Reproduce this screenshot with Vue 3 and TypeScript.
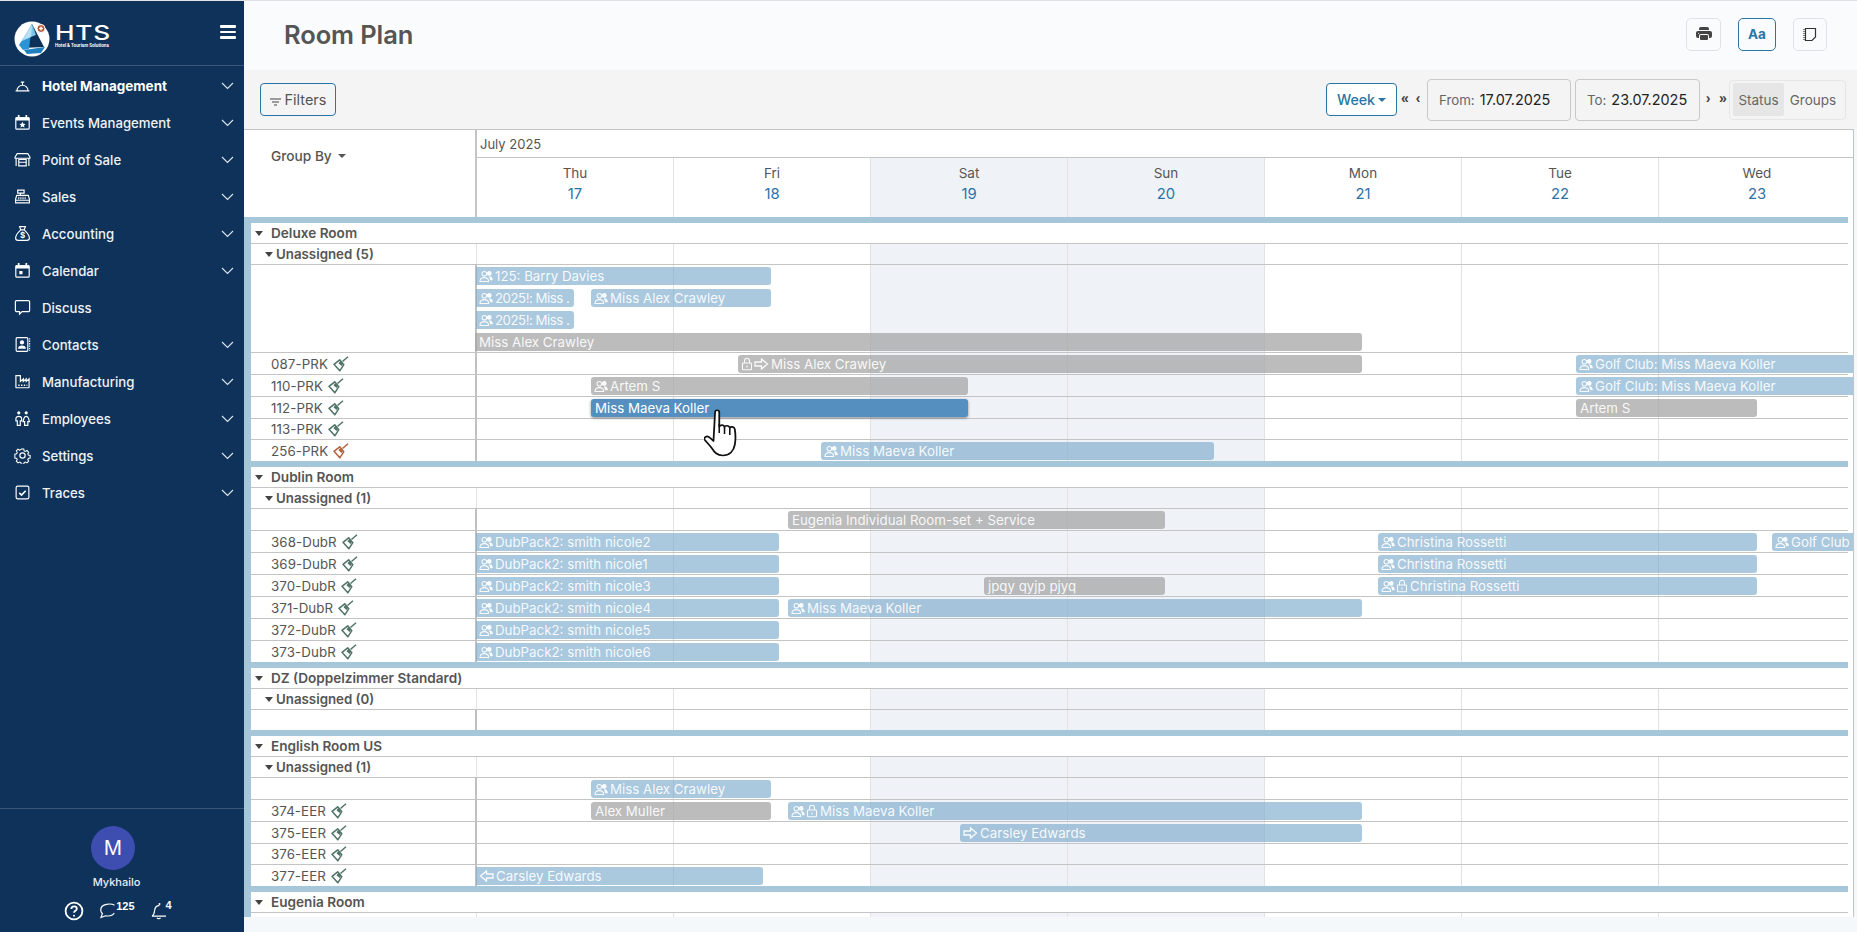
<script setup lang="ts">
type Icon = 'people' | 'lock' | 'right' | 'left'
interface Bar { x: number; e: number; t: string; g?: boolean; sel?: boolean; lane?: number; ic?: Icon[]; tight?: boolean }
interface Row { kind: 'group' | 'un' | 'lane' | 'room'; label?: string; h: number; dirty?: boolean; bars?: Bar[]; noLine?: boolean }

const P: Icon[] = ['people']
const nav = [
  { t: 'Hotel Management', on: true, i: '<path d="M1.5 13h13M2.8 13a5.2 5.2 0 0 1 10.4 0M8 7.6V5.2M6.4 4.8h3.2"/>' },
  { t: 'Events Management', i: '<path d="M2.5 3.5h11a.8.8 0 0 1 .8.8v9a1 1 0 0 1-1 1h-10.6a1 1 0 0 1-1-1v-9a.8.8 0 0 1 .8-.8z"/><path fill="#fff" stroke="none" d="M1.7 3h12.6v3H1.7zM3.6 1h1.6v3H3.6zM10.8 1h1.6v3h-1.6zM8 7.3l.9 1.9 2 .2-1.5 1.4.5 2L8 11.8l-1.9 1 .5-2-1.5-1.4 2-.2z"/>' },
  { t: 'Point of Sale', i: '<path d="M3 2.5h10l2 3.2v1.1H1V5.7zM2 7v7M14 7v7M4.5 8h7v6h-7zM4.5 10.6h7"/>' },
  { t: 'Sales', i: '<path d="M2.6 7h10.8l1.1 3.5v3.5H1.500v-3.500zM3.500 2h6v2.800h-6zM6 4.800V7M1.500 11.500h13"/><path stroke-dasharray="1 1" d="M4 8.700h8M4 10h8"/>' },
  { t: 'Accounting', i: '<path d="M5.300 1.500h5.400L9.600 4.600H6.400zM6.200 4.800C3.800 7 1.500 10 1.500 12.300c0 1.400 1 2.200 2.300 2.200h8.400c1.300 0 2.300-.8 2.300-2.200C14.500 10 12.200 7 9.800 4.800"/><text x="8" y="12.600" font-size="7.500" font-family="Inter" font-weight="700" fill="#fff" stroke="none" text-anchor="middle">$</text>' },
  { t: 'Calendar', i: '<path d="M2.500 3.500h11a.8.8 0 0 1 .8.8v9a1 1 0 0 1-1 1H2.700a1 1 0 0 1-1-1v-9a.8.8 0 0 1 .8-.8z"/><path fill="#fff" stroke="none" d="M1.700 3h12.600v3H1.700zM3.600 1h1.600v3H3.600zM10.800 1h1.600v3h-1.600zM5 8.500h3v3H5z"/>' },
  { t: 'Discuss', plain: true, i: '<path d="M2.500 1.500h11a1.200 1.200 0 0 1 1.200 1.200v8a1.200 1.200 0 0 1-1.200 1.200H7.600l-2.400 2.400v-2.400H2.500a1.200 1.200 0 0 1-1.200-1.200v-8a1.200 1.200 0 0 1 1.200-1.200z"/>' },
  { t: 'Contacts', i: '<rect x="2" y="1.500" width="11" height="13" rx="1"/><path stroke-dasharray="1.300 1" d="M14.700 2v12"/><circle cx="7.500" cy="6" r="2" fill="#fff" stroke="none"/><path fill="#fff" stroke="none" d="M3.800 12c0-2 1.600-3 3.700-3s3.700 1 3.700 3z"/>' },
  { t: 'Manufacturing', i: '<path d="M1.800 2.500v10.800a.6.6 0 0 0 .6.600h11.200a.6.600 0 0 0 .6-.6V5.500L11.500 8V5.500L8.800 8V5.500L6 8V2.500z"/><path stroke-dasharray="1.300 1.300" stroke-width="1.400" d="M4 11.500h8.500"/>' },
  { t: 'Employees', i: '<circle cx="4.500" cy="2.700" r="1.500" fill="#fff" stroke="none"/><circle cx="11.500" cy="2.700" r="1.500" fill="#fff" stroke="none"/><path d="M4.500 6c-1.600 0-2.700.8-2.700 2.200v2h1.300v4.300h2.800v-4.300h1.300v-2C7.200 6.800 6.100 6 4.500 6zM11.500 6c-1.300 0-2 1-2.200 2l-.8 3h1.500v3.500h3V11h1.500l-.8-3c-.2-1-.900-2-2.200-2z"/>' },
  { t: 'Settings', i: '<circle cx="8" cy="8" r="2.500"/><path d="M6.700 1.300h2.600l.4 1.900 1.300.6 1.700-1 1.800 1.800-1 1.700.6 1.300 1.900.4v2.600l-1.900.4-.6 1.300 1 1.700-1.800 1.800-1.700-1-1.300.6-.4 1.900H6.700l-.4-1.900-1.300-.6-1.700 1-1.800-1.800 1-1.700-.6-1.300-1.900-.4V6.600l1.900-.4.6-1.300-1-1.700 1.800-1.800 1.700 1 1.300-.6z" transform="translate(.8 .8) scale(.9)"/>' },
  { t: 'Traces', i: '<rect x="2" y="2" width="12" height="12" rx="1.500"/><path stroke-width="1.500" d="M5 8.300l2.100 2.100L11 6.300"/>' }
]

const nic = (n: number): Bar => ({ x: 476, e: 779, t: `DubPack2: smith nicole${n}`, ic: P })
const chris = (ic: Icon[] = P): Bar => ({ x: 1378, e: 1757, t: 'Christina Rossetti', ic })
const golf: Bar = { x: 1576, e: 1856, t: 'Golf Club: Miss Maeva Koller', ic: P }

const rows: Row[][] = [
  [
    { kind: 'group', label: 'Deluxe Room', h: 21 },
    { kind: 'un', label: 'Unassigned (5)', h: 21 },
    { kind: 'lane', h: 88, bars: [
      { x: 476, e: 771, t: '125: Barry Davies', ic: P, lane: 0 },
      { x: 476, e: 574, t: '2025!: Miss .', ic: P, lane: 1, tight: true },
      { x: 591, e: 771, t: 'Miss Alex Crawley', ic: P, lane: 1 },
      { x: 476, e: 574, t: '2025!: Miss .', ic: P, lane: 2, tight: true },
      { x: 475, e: 1362, t: 'Miss Alex Crawley', g: true, lane: 3 }
    ] },
    { kind: 'room', label: '087-PRK', h: 22, bars: [{ x: 738, e: 1362, t: 'Miss Alex Crawley', g: true, ic: ['lock', 'right'] }, golf] },
    { kind: 'room', label: '110-PRK', h: 22, bars: [{ x: 591, e: 968, t: 'Artem S', g: true, ic: P }, golf] },
    { kind: 'room', label: '112-PRK', h: 22, bars: [{ x: 591, e: 968, t: 'Miss Maeva Koller', sel: true }, { x: 1576, e: 1757, t: 'Artem S', g: true }] },
    { kind: 'room', label: '113-PRK', h: 21 },
    { kind: 'room', label: '256-PRK', h: 21, dirty: true, noLine: true, bars: [{ x: 821, e: 1214, t: 'Miss Maeva Koller', ic: P }] }
  ],
  [
    { kind: 'group', label: 'Dublin Room', h: 21 },
    { kind: 'un', label: 'Unassigned (1)', h: 21 },
    { kind: 'lane', h: 22, bars: [{ x: 788, e: 1165, t: 'Eugenia Individual Room-set + Service', g: true }] },
    { kind: 'room', label: '368-DubR', h: 22, bars: [nic(2), chris(), { x: 1772, e: 1856, t: 'Golf Club', ic: P }] },
    { kind: 'room', label: '369-DubR', h: 22, bars: [nic(1), chris()] },
    { kind: 'room', label: '370-DubR', h: 22, bars: [nic(3), { x: 984, e: 1165, t: 'jpqy qyjp pjyq', g: true }, chris(['people', 'lock'])] },
    { kind: 'room', label: '371-DubR', h: 22, bars: [nic(4), { x: 788, e: 1362, t: 'Miss Maeva Koller', ic: P }] },
    { kind: 'room', label: '372-DubR', h: 22, bars: [nic(5)] },
    { kind: 'room', label: '373-DubR', h: 21, noLine: true, bars: [nic(6)] }
  ],
  [
    { kind: 'group', label: 'DZ (Doppelzimmer Standard)', h: 21 },
    { kind: 'un', label: 'Unassigned (0)', h: 21 },
    { kind: 'lane', h: 20, noLine: true }
  ],
  [
    { kind: 'group', label: 'English Room US', h: 21 },
    { kind: 'un', label: 'Unassigned (1)', h: 21 },
    { kind: 'lane', h: 22, bars: [{ x: 591, e: 771, t: 'Miss Alex Crawley', ic: P }] },
    { kind: 'room', label: '374-EER', h: 22, bars: [{ x: 591, e: 771, t: 'Alex Muller', g: true }, { x: 788, e: 1362, t: 'Miss Maeva Koller', ic: ['people', 'lock'] }] },
    { kind: 'room', label: '375-EER', h: 22, bars: [{ x: 960, e: 1362, t: 'Carsley Edwards', ic: ['right'] }] },
    { kind: 'room', label: '376-EER', h: 21 },
    { kind: 'room', label: '377-EER', h: 21, noLine: true, bars: [{ x: 476, e: 763, t: 'Carsley Edwards', ic: ['left'] }] }
  ],
  [
    { kind: 'group', label: 'Eugenia Room', h: 21 },
    { kind: 'un', label: 'Unassigned (1)', h: 21 }
  ]
]

const days = [
  { d: 'Thu', n: 17 }, { d: 'Fri', n: 18 }, { d: 'Sat', n: 19, we: true }, { d: 'Sun', n: 20, we: true },
  { d: 'Mon', n: 21 }, { d: 'Tue', n: 22 }, { d: 'Wed', n: 23 }
]

const barStyle = (b: Bar) => ({
  left: `${b.x - 477}px`,
  width: `${b.e - b.x}px`,
  top: `${2 + 22 * (b.lane ?? 0)}px`
})
</script>

<template>
  <div class="app">
    <aside class="side">
      <div class="brand">
        <svg class="logo" width="36" height="36" viewBox="0 0 36 36">
          <circle cx="18" cy="18" r="17.500" fill="#fff" />
          <path d="M18 3 L30 26 L8 27 Z" fill="#0e3158" />
          <path d="M18 3 L5 24 L9 29 L15 28 Z" fill="#2a95d5" />
          <path d="M18 3 L9 19 L22 14 Z" fill="#7cc6ea" />
          <path d="M18 4 L4 22 L17 16 Z" fill="#ffffff" opacity=".45" />
          <path d="M10 29 L31 26 L27 32 L13 33 Z" fill="#1f7fc0" />
          <circle cx="27" cy="7.500" r="4" fill="#b5552f" stroke="#fff" stroke-width="1" />
          <path d="M27 5.500v4M25 7.500h4" stroke="#fff" stroke-width="1.300" />
        </svg>
        <div class="wordmark">
          <span class="hts">HTS</span>
          <span class="sub">Hotel &amp; Tourism Solutions</span>
        </div>
        <div class="burger"><i></i><i></i><i></i></div>
      </div>

      <nav class="nav">
        <div v-for="n in nav" :key="n.t" class="item" :class="{ on: n.on }">
          <svg class="ico" width="17" height="17" viewBox="0 0 16 16" fill="none" stroke="#fff" stroke-width="1.100" v-html="n.i"></svg>
          <span class="lbl">{{ n.t }}</span>
          <svg v-if="!n.plain" class="chev" width="13" height="8" viewBox="0 0 13 8" fill="none" stroke="#dfe6ee" stroke-width="1.100"><path d="M1 1l5.500 5.500L12 1" /></svg>
        </div>
      </nav>

      <div class="foot">
        <div class="avatar">M</div>
        <div class="uname">Mykhailo</div>
        <div class="tools">
          <svg width="20" height="20" viewBox="0 0 20 20" fill="none" stroke="#fff" stroke-width="1.800">
            <circle cx="10" cy="10" r="8.400" />
            <path d="M7.300 8c0-1.700 1.200-2.600 2.800-2.600 1.500 0 2.700.9 2.700 2.300 0 2.100-2.800 2.100-2.800 4.100" />
            <circle cx="10" cy="14.700" r="1" fill="#fff" stroke="none" />
          </svg>
          <span class="tool chat">
            <svg width="17" height="16" viewBox="0 0 17 16" fill="none" stroke="#fff" stroke-width="1.200"><path d="M15.500 2.200C13.500 1 10.500.8 7.500 1.300 3.800 2 1.500 4.500 1.800 7.500c.1 1.200.7 2.300 1.600 3L2 14.500l4.500-1.700c3.400.5 7.300-.4 8.700-2.800" /></svg>
            <b>125</b>
          </span>
          <span class="tool bell">
            <svg width="16" height="18" viewBox="0 0 16 18" fill="none" stroke="#fff" stroke-width="1.200"><path d="M1 14.200c2-1.300 2.400-3.500 2.600-5.700C3.900 5.500 5.800 3.500 8.500 3.300M1 14.200h14M6 15.700c.6 1.300 2.800 1.300 3.500 0" /><circle cx="8.500" cy="2" r="1" fill="#fff" stroke="none" /></svg>
            <b>4</b>
          </span>
        </div>
      </div>
    </aside>

    <main class="main">
      <header class="head">
        <h1>Room Plan</h1>
        <div class="actions">
          <button class="sq print">
            <svg width="16" height="16" viewBox="0 0 16 16" fill="#444"><path d="M5 1a2 2 0 0 0-2 2v1h10V3a2 2 0 0 0-2-2H5zm6 8H5a1 1 0 0 0-1 1v3a1 1 0 0 0 1 1h6a1 1 0 0 0 1-1v-3a1 1 0 0 0-1-1z" /><path d="M0 7a2 2 0 0 1 2-2h12a2 2 0 0 1 2 2v3a2 2 0 0 1-2 2h-1v-2a2 2 0 0 0-2-2H5a2 2 0 0 0-2 2v2H2a2 2 0 0 1-2-2V7zm2.500 1a.5.5 0 1 0 0-1 .5.5 0 0 0 0 1z" /></svg>
          </button>
          <button class="sq aa">Aa</button>
          <button class="sq note">
            <svg width="14" height="15" viewBox="0 0 14 15" fill="none" stroke="#333" stroke-width="1.200"><path d="M2.500 1.500h10v8.500l-3.500 3.500H2.500z" /><path stroke-dasharray="1 1" d="M1 2v11" /></svg>
          </button>
        </div>
      </header>

      <div class="bar">
        <button class="filters">
          <svg width="11" height="8" viewBox="0 0 11 8" fill="none" stroke="#444" stroke-width="1"><path d="M0 1h11M2 4h7M4 7h3" /></svg>
          Filters
        </button>
        <div class="controls">
          <button class="week">Week<i class="caret"></i></button>
          <span class="arrow a1">«</span>
          <span class="arrow a2">‹</span>
          <div class="date from"><span>From:</span><b>17.07.2025</b></div>
          <div class="date to"><span>To:</span><b>23.07.2025</b></div>
          <span class="arrow a3">›</span>
          <span class="arrow a4">»</span>
          <div class="seg"><span class="act">Status</span><span>Groups</span></div>
        </div>
      </div>

      <section class="board">
        <div class="thead">
          <div class="groupby">Group By<i class="caret grey"></i></div>
          <div class="cal">
            <div class="month">July 2025</div>
            <div class="dayrow">
              <div v-for="d in days" :key="d.n" class="day" :class="{ we: d.we }">
                <span>{{ d.d }}</span>
                <em>{{ d.n }}</em>
              </div>
            </div>
          </div>
        </div>

        <div class="tbody">
          <div v-for="(sec, si) in rows" :key="si" class="section">
            <div class="band"></div>
            <div v-for="(r, ri) in sec" :key="ri" class="row" :class="[r.kind, { noline: r.noLine }]" :style="{ height: r.h + 'px' }">
              <template v-if="r.kind === 'group'">
                <div class="glabel"><i class="tri"></i>{{ r.label }}</div>
              </template>
              <template v-else>
                <div class="cell">
                  <template v-if="r.kind === 'un'"><i class="tri small"></i><b>{{ r.label }}</b></template>
                  <template v-else-if="r.kind === 'room'">
                    <span class="rname">{{ r.label }}</span>
                    <svg class="broom" :class="{ dirty: r.dirty }" width="16" height="16" viewBox="0 0 16 16"><path d="M15 .8L9.500 5.500" stroke="currentColor" stroke-width="1.500" fill="none" /><path d="M6.700 3.800L10.800 8.700 6.800 14.800 1 8.300z" fill="none" stroke="currentColor" stroke-width="1.500" stroke-linejoin="round" /><path d="M7.200 5L9.800 8.200 8.600 10 5.500 7.200z" fill="currentColor" /></svg>
                  </template>
                </div>
                <div class="tl">
                  <div v-for="(b, bi) in r.bars" :key="bi" class="ev" :class="{ grey: b.g, sel: b.sel, flat: b.x <= 476, tight: b.tight }" :style="barStyle(b)">
                    <template v-for="(ic, ii) in b.ic" :key="ii">
                      <svg v-if="ic === 'people'" class="ei" width="14" height="13" viewBox="0 0 15 14" fill="none" stroke="currentColor" stroke-width="1.100"><circle cx="5.700" cy="4" r="2.500" /><path d="M1 12.500c0-3 2-4.300 4.700-4.300s4.700 1.300 4.700 4.300z" /><circle cx="11" cy="3.700" r="2" fill="currentColor" /><path d="M11 7.300c1.800 0 3.200 1.300 3.200 3.300h-2.400" fill="currentColor" /></svg>
                      <svg v-else-if="ic === 'lock'" class="ei" width="12" height="14" viewBox="0 0 12 14" fill="none" stroke="currentColor" stroke-width="1.100"><rect x="1.500" y="6" width="9" height="6.800" rx=".8" /><path d="M3.500 6V3.800a2.500 2.500 0 0 1 5 0V6M6 8.500v2" /></svg>
                      <svg v-else-if="ic === 'right'" class="ei" width="15" height="14" viewBox="0 0 15 14" fill="none" stroke="currentColor" stroke-width="1.300"><path d="M1 5h6.500V2l6 5-6 5V9H1z" /></svg>
                      <svg v-else class="ei" width="15" height="14" viewBox="0 0 15 14" fill="none" stroke="currentColor" stroke-width="1.300"><path d="M14 5H7.500V2l-6 5 6 5V9H14z" /></svg>
                    </template>
                    <span class="et">{{ b.t }}</span>
                  </div>
                  <svg v-if="r.label === '112-PRK'" class="hand" width="40" height="48" viewBox="0 0 38 48" preserveAspectRatio="none">
                    <path d="M10.500 3.500c0-3 4-3 4 0v14c1.500-2 4.500-1.800 5 .5.800-1.800 4.300-1.700 5 .7 1-1.400 4.200-1.200 4.700 1.200.8 5 .9 11 .1 15.600-1 6.500-5 11-11.500 11-5.500 0-8-3.500-10.500-7.500-2-3-5-6-6.500-8-1.500-2.300 1.500-4.500 3.800-3 1.800 1.200 3 2.500 4.400 4z" fill="#fff" stroke="#111" stroke-width="1.700" stroke-linejoin="round" />
                    <path d="M14.500 15v9M19.500 18v7M24.500 19v7" stroke="#111" stroke-width="1.500" fill="none" />
                  </svg>
                </div>
              </template>
            </div>
          </div>
        </div>
      </section>
    </main>
  </div>
</template>

<style>
html, body { margin: 0; height: 100%; overflow: hidden; background: #f5f8fb; }
</style>

<style scoped>
* { box-sizing: border-box; }
.app { display: flex; height: 932px; width: 1857px; border-top: 1px solid #dfe3e6; font-family: Inter, "Liberation Sans", sans-serif; overflow: hidden; color: #555; }
.side { width: 244px; flex: none; background: #0e3259; color: #fff; display: flex; flex-direction: column; }
.brand { height: 65px; border-bottom: 1px solid #3b5575; display: flex; align-items: flex-start; position: relative; padding: 20px 0 0 14px; }
.wordmark { margin-left: 5px; display: flex; flex-direction: column; color: #fff; }
.hts { font-size: 21px; font-weight: 500; letter-spacing: .6px; line-height: 19px; margin-top: 3px; transform: scale(1.25, .95); transform-origin: top left; }
.sub { font-size: 4.300px; font-weight: 700; line-height: 6px; margin-top: 0; white-space: nowrap; }
.burger { margin: 4px 8px 0 auto; width: 16px; display: flex; flex-direction: column; gap: 3px; }
.burger i { display: block; height: 2.500px; background: #fff; border-radius: 1px; }

.nav { padding-top: 1px; }
.item { height: 37px; display: flex; align-items: center; padding: 0 10px 0 14px; font-size: 13.200px; font-weight: 500; color: #eef2f6; }
.item.on { font-weight: 700; font-size: 13.500px; color: #fff; }
.ico { flex: none; }
.lbl { margin-left: 11px; white-space: nowrap; }
.chev { margin-left: auto; }

.foot { margin-top: auto; height: 124px; border-top: 1px solid #3b5575; display: flex; flex-direction: column; align-items: center; padding-top: 17px; position: relative; }
.avatar { width: 44px; height: 44px; border-radius: 50%; background: #3e4db0; display: flex; align-items: center; justify-content: center; font: 22px "Liberation Sans", sans-serif; color: #fff; margin-left: -18px; }
.uname { font-size: 11px; font-weight: 500; color: #e8edf3; margin-top: 5px; margin-left: -11px; }
.tools { display: flex; align-items: center; margin-top: 12px; margin-left: -8px; gap: 0; }
.tool { display: inline-flex; align-items: flex-start; position: relative; }
.tool b { font: 700 11px "Liberation Sans", sans-serif; margin-top: -3px; }
.chat { margin-left: 15px; }
.bell { margin-left: 16px; }
.bell b { margin-left: -1px; }

.main { flex: 1; min-width: 0; display: flex; flex-direction: column; }
.head { height: 69px; flex: none; background: #fafbfd; display: flex; align-items: center; justify-content: space-between; padding: 0 30px 3px 40px; }
h1 { margin: 0; font-size: 25.500px; font-weight: 600; color: #555; letter-spacing: -.1px; }
.actions { display: flex; gap: 17px; align-items: center; }
.sq { height: 33px; width: 35px; display: flex; align-items: center; justify-content: center; background: #fafbfd; border: 1px solid #dfe3e8; border-radius: 5px; padding: 0; font-family: inherit; }
.aa { width: 38px; border-color: #2a75a8; color: #2a75a8; font-size: 13.500px; font-weight: 700; }
.note { width: 34px; }

.bar { height: 59px; flex: none; background: #f4f4f4; display: flex; align-items: center; justify-content: space-between; padding: 0 11px 0 16px; }
.filters { width: 76px; height: 33px; border: 1px solid #2a75a8; border-radius: 4px; background: #f4f4f4; display: flex; align-items: center; justify-content: center; gap: 4px; font: 14.500px Inter, sans-serif; color: #555; padding: 0; }
.filters svg { margin-top: 4px; }
.controls { display: flex; align-items: center; }
.week { width: 71px; height: 33px; border: 1px solid #2a75a8; border-radius: 4px; background: #fff; color: #2a75a8; font: 500 14.200px Inter, sans-serif; display: flex; align-items: center; justify-content: center; gap: 2px; padding: 0; }
.caret { display: inline-block; width: 0; height: 0; border: 4px solid transparent; border-top-color: #2a75a8; border-bottom: 0; margin-left: 1px; }
.caret.grey { border-top-color: #555; margin-left: 6px; vertical-align: 3px; }
.arrow { font: 600 14px "Liberation Sans", sans-serif; color: #444; text-align: center; margin-top: -3px; }
.a1 { width: 12px; margin-left: 2px; }
.a2 { width: 6px; margin-left: 4px; }
.a3 { width: 6px; margin-left: 5px; }
.a4 { width: 8px; margin-left: 8px; }
.date { height: 42px; border: 1px solid #c9c9c9; border-radius: 4px; display: flex; align-items: center; font-size: 13.300px; color: #666; background: #f4f4f4; }
.date b { font-size: 14.400px; font-weight: 400; color: #222; margin-left: 5px; white-space: nowrap; }
.from { width: 144px; margin-left: 6px; padding-left: 11px; }
.to { width: 125px; margin-left: 4px; padding-left: 11px; }
.seg { display: flex; align-items: center; height: 40px; width: 117px; margin-left: 2px; border: 1px solid #e6e6e6; border-radius: 4px; padding: 3px; font-size: 13.500px; color: #666; }
.seg span { height: 33px; display: flex; align-items: center; justify-content: center; }
.seg .act { width: 51px; background: #e6e6e6; border-radius: 2px; }
.seg span:last-child { flex: 1; }

.board { height: 788px; flex: none; background: #fff; border-top: 1px solid #c4c4c4; border-right: 1px solid #c4c4c4; overflow: hidden; width: 1610px; }
.thead { display: flex; height: 87px; }
.groupby { width: 233px; flex: none; border-right: 2px solid #c4c4c4; padding: 18px 0 0 27px; font-size: 13.700px; font-weight: 500; color: #555; }
.cal { flex: 1; min-width: 0; }
.month { height: 28px; border-bottom: 1px solid #c4c4c4; padding: 6px 0 0 3px; font-size: 13px; line-height: 17px; color: #555; }
.dayrow { display: grid; grid-template-columns: repeat(7, 197px); height: 59px; }
.day { border-right: 1px solid #e2e2e2; display: flex; flex-direction: column; align-items: center; padding-top: 5px; font-size: 13.500px; line-height: 21px; color: #555; }
.day.we { background: #eff3f7; }
.day em { font-style: normal; font-size: 14.800px; color: #2a73a8; }

.tbody { border-left: 7px solid #a6c6da; }
.band { height: 6px; background: #a6c6da; width: 1597px; }
.row { display: flex; width: 1597px; border-bottom: 1px solid #c4c4c4; position: relative; }
.row.noline { border-bottom: 0; }
.glabel { display: flex; align-items: center; padding-left: 4px; font-size: 13.600px; font-weight: 600; color: #555; white-space: nowrap; }
.tri { display: inline-block; width: 0; height: 0; border: 4px solid transparent; border-top: 5px solid #444; border-bottom: 0; margin-right: 8px; }
.tri.small { margin: 0 3px 0 0; }
.cell { width: 226px; flex: none; display: flex; align-items: center; font-size: 13.300px; white-space: nowrap; border-right: 2px solid #c0c0c0; }
.un .cell { padding-left: 14px; border-right: 1px solid #e2e2e2; }
.un b { font-weight: 600; color: #555; }
.rname { margin-left: 20px; letter-spacing: .1px; }
.broom { margin-left: 5px; color: #4f7368; }
.broom.dirty { color: #b5613a; }
.tl { flex: 1; position: relative; min-width: 0;
  background-image: repeating-linear-gradient(to right, transparent 0 196px, #e2e2e2 196px 197px), linear-gradient(to right, transparent 394px, #eff3f7 394px 788px, transparent 788px); }
.ev { position: absolute; height: 18px; border-radius: 3px; background: rgba(125, 170, 205, .65); color: rgba(255, 255, 255, .92); display: flex; align-items: center; padding-left: 3px; font-size: 13.300px; white-space: nowrap; overflow: hidden; z-index: 1; gap: 1px; }
.ev.flat { border-radius: 0 3px 3px 0; }
.ev.grey { background: rgba(165, 165, 165, .75); }
.ev.sel { background: #558fbf; color: #fff; box-shadow: 0 1px 3px rgba(0, 0, 0, .45); z-index: 2; }
.ev.tight { letter-spacing: -.5px; }
.ei { flex: none; }
.et { min-width: 0; margin-left: 1px; }
.hand { position: absolute; left: 227px; top: 12px; z-index: 5; }
</style>
